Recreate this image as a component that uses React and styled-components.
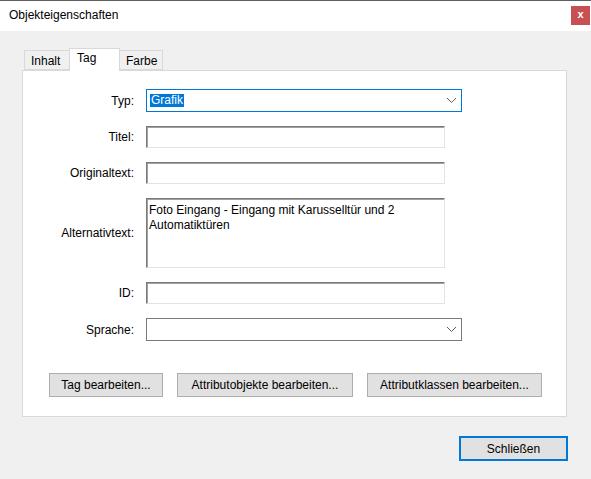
import React from "react";
import styled, { createGlobalStyle } from "styled-components";

const GlobalStyle = createGlobalStyle`
  html, body {
    margin: 0;
    padding: 0;
    background: #f0f0f0;
  }
  * {
    box-sizing: border-box;
  }
`;

export default function App() {
  return (
    <>
      <GlobalStyle />
      <Window>
        <TitleBar>
          <Title>Objekteigenschaften</Title>
          <CloseButton>x</CloseButton>
        </TitleBar>
        <Body>
          <TabStrip>
            <Tab width={46}>Inhalt</Tab>
            <Tab width={51} active>Tag</Tab>
            <Tab width={44}>Farbe</Tab>
          </TabStrip>
          <Panel>
            <Form>
              <Label>Typ:</Label>
              <Select focused>
                <Selected>Grafik</Selected>
                <Chevron />
              </Select>

              <Label>Titel:</Label>
              <Input />

              <Label>Originaltext:</Label>
              <Input />

              <Label>Alternativtext:</Label>
              <TextArea>
                Foto Eingang - Eingang mit Karusselltür und 2 Automatiktüren
              </TextArea>

              <Label>ID:</Label>
              <Input />

              <Label>Sprache:</Label>
              <Select>
                <span />
                <Chevron />
              </Select>
            </Form>
            <ButtonRow>
              <Button width={114}>Tag bearbeiten...</Button>
              <Button width={176}>Attributobjekte bearbeiten...</Button>
              <Button width={175}>Attributklassen bearbeiten...</Button>
            </ButtonRow>
          </Panel>
          <Footer>
            <DefaultButton>Schließen</DefaultButton>
          </Footer>
        </Body>
      </Window>
    </>
  );
}

function Chevron() {
  return (
    <svg width="11" height="7" viewBox="0 0 11 7">
      <path d="M1 1 L5.5 5.5 L10 1" fill="none" stroke="#606060" strokeWidth="1" />
    </svg>
  );
}

const Window = styled.div`
  width: 591px;
  height: 479px;
  display: flex;
  flex-direction: column;
  font-family: "Liberation Sans", Arial, sans-serif;
  font-size: 12px;
  color: #000;
`;

const TitleBar = styled.div`
  height: 31px;
  border-top: 1px solid #5f5f5f;
  background: #fff;
  display: flex;
  align-items: center;
  justify-content: space-between;
  padding: 0 1px 2px 9px;
`;

const Title = styled.div`
  font-size: 12px;
  color: #000;
`;

const CloseButton = styled.div`
  width: 19px;
  height: 19px;
  background: #c75050;
  color: #fff;
  font-weight: bold;
  font-size: 11px;
  display: flex;
  align-items: center;
  justify-content: center;
  padding-bottom: 2px;
`;

const Body = styled.div`
  flex: 1;
  padding: 17px 23px 0 22px;
  display: flex;
  flex-direction: column;
`;

const TabStrip = styled.div`
  display: flex;
  align-items: flex-end;
  height: 22px;
  padding-left: 2px;
  position: relative;
  z-index: 1;
`;

const Tab = styled.div`
  width: ${(p) => p.width}px;
  height: ${(p) => (p.active ? 23 : 20)}px;
  margin-bottom: ${(p) => (p.active ? -1 : 0)}px;
  margin-left: ${(p) => (p.active ? -1 : 0)}px;
  margin-right: ${(p) => (p.active ? -1 : 0)}px;
  background: ${(p) => (p.active ? "#fff" : "#f0f0f0")};
  border: 1px solid #d9d9d9;
  border-bottom: ${(p) => (p.active ? "none" : "1px solid #d9d9d9")};
  padding: ${(p) => (p.active ? "2px 0 0 7px" : "3px 0 0 6px")};
  line-height: 14px;
  position: relative;
  z-index: ${(p) => (p.active ? 2 : 1)};
`;

const Panel = styled.div`
  width: 545px;
  height: 347px;
  background: #fff;
  border: 1px solid #d9d9d9;
  padding: 18px 0 0 0;
  display: flex;
  flex-direction: column;
`;

const Form = styled.div`
  display: grid;
  grid-template-columns: 111px auto;
  column-gap: 12px;
  row-gap: 14px;
  align-items: center;
  justify-items: start;
`;

const Label = styled.div`
  justify-self: end;
  line-height: 14px;
`;

const Select = styled.div`
  width: 316px;
  height: 23px;
  background: #fff;
  border: 1px solid ${(p) => (p.focused ? "#0078d7" : "#7a7a7a")};
  display: flex;
  align-items: center;
  justify-content: space-between;
  padding: 0 4px 0 3px;
`;

const Selected = styled.span`
  background: #0078d7;
  color: #fff;
  line-height: 13px;
  padding: 0 1px;
`;

const Input = styled.div`
  width: 299px;
  height: 22px;
  background: #fff;
  border: 1px solid;
  border-color: #7a7a7a #e3e3e3 #e3e3e3 #7a7a7a;
  box-shadow: inset 1px 1px 0 #a0a0a0;
`;

const TextArea = styled(Input)`
  height: 70px;
  padding: 4px 40px 0 2px;
  line-height: 15px;
`;

const ButtonRow = styled.div`
  display: flex;
  gap: 14px;
  padding-left: 26px;
  margin-top: 32px;
`;

const Button = styled.div`
  width: ${(p) => p.width}px;
  height: 24px;
  background: #e1e1e1;
  border: 1px solid #adadad;
  display: flex;
  align-items: center;
  justify-content: center;
`;

const Footer = styled.div`
  display: flex;
  justify-content: flex-end;
  padding-top: 19px;
`;

const DefaultButton = styled(Button)`
  width: 109px;
  height: 25px;
  border: 2px solid #0078d7;
`;
